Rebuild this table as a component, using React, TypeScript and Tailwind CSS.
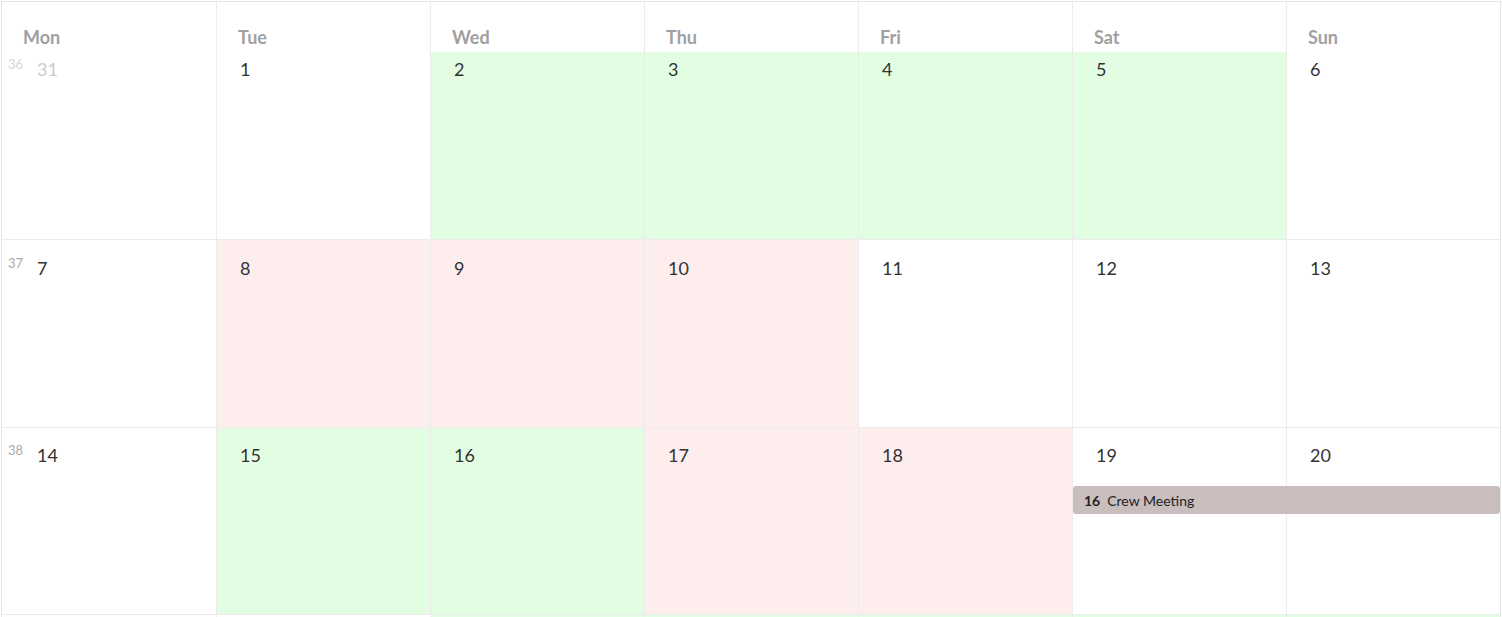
import React from "react";

type Tone = "none" | "green" | "pink";

interface Day {
  n: number;
  tone: Tone;
  other?: boolean;
}

interface Week {
  no: number;
  pt: string;
  h: string;
  days: Day[];
}

const DAY_NAMES = ["Mon", "Tue", "Wed", "Thu", "Fri", "Sat", "Sun"];

const WEEKS: Week[] = [
  {
    no: 36,
    pt: "pt-[3px]",
    h: "h-[188px]",
    days: [
      { n: 31, tone: "none", other: true },
      { n: 1, tone: "none" },
      { n: 2, tone: "green" },
      { n: 3, tone: "green" },
      { n: 4, tone: "green" },
      { n: 5, tone: "green" },
      { n: 6, tone: "none" },
    ],
  },
  {
    no: 37,
    pt: "pt-[14px]",
    h: "h-[188px]",
    days: [
      { n: 7, tone: "none" },
      { n: 8, tone: "pink" },
      { n: 9, tone: "pink" },
      { n: 10, tone: "pink" },
      { n: 11, tone: "none" },
      { n: 12, tone: "none" },
      { n: 13, tone: "none" },
    ],
  },
  {
    no: 38,
    pt: "pt-[13px]",
    h: "h-[187px]",
    days: [
      { n: 14, tone: "none" },
      { n: 15, tone: "green" },
      { n: 16, tone: "green" },
      { n: 17, tone: "pink" },
      { n: 18, tone: "pink" },
      { n: 19, tone: "none" },
      { n: 20, tone: "none" },
    ],
  },
];

// next week only peeks in at the bottom edge of the view
const NEXT_TONES: Tone[] = ["none", "none", "green", "green", "green", "green", "green"];

const toneClass: Record<Tone, string> = {
  none: "bg-white",
  green: "bg-[#e3fde3]",
  pink: "bg-[#fdeded]",
};

function DayCell({ day, first, week }: { day: Day; first: boolean; week: Week }) {
  return (
    <div
      className={`${toneClass[day.tone]} ${first ? "" : "border-l border-[#ececec]"} ${week.pt} flex items-start`}
    >
      {first ? (
        <>
          <span
            className={`w-[35px] pl-[6px] pt-[1px] text-[13px] leading-4 ${day.other ? "text-[#d6d6d6]" : "text-[#aaaaaa]"}`}
          >
            {week.no}
          </span>
          <span className={`text-lg leading-7 ${day.other ? "text-[#cccccc]" : "text-[#333]"}`}>
            {day.n}
          </span>
        </>
      ) : (
        <span className="pl-[23px] text-lg leading-7 text-[#333]">{day.n}</span>
      )}
    </div>
  );
}

export default function App() {
  return (
    <div
      className="h-[617px] overflow-hidden bg-white p-px"
      style={{ fontFamily: "Lato, 'Liberation Sans', sans-serif" }}
    >
      <div className="w-[1500px] border border-[#e3e5ea]">
        {/* weekday header */}
        <div className="grid h-[50px] grid-cols-7">
          {DAY_NAMES.map((d, i) => (
            <div
              key={d}
              className={`${i === 0 ? "" : "border-l border-[#ececec]"} pl-[21px] pt-[21px] text-lg font-bold leading-7 text-[#a0a0a0]`}
            >
              {d}
            </div>
          ))}
        </div>

        {WEEKS.map((w) => (
          <div key={w.no} className={`relative grid grid-cols-7 border-b border-[#ececec] ${w.h}`}>
            {w.days.map((d, i) => (
              <DayCell key={d.n} day={d} first={i === 0} week={w} />
            ))}
            {w.no === 38 && (
              <div className="absolute left-[1071px] top-[58px] flex h-[28px] w-[427px] items-center rounded-[3px] bg-[#c9bdbe] pl-[11px] text-[14px] text-[#222]">
                <span className="font-bold">16</span>
                <span className="ml-[7px]">Crew Meeting</span>
              </div>
            )}
          </div>
        ))}

        <div className="grid h-[10px] grid-cols-7">
          {NEXT_TONES.map((t, i) => (
            <div key={i} className={`${toneClass[t]} ${i === 0 ? "" : "border-l border-[#ececec]"}`} />
          ))}
        </div>
      </div>
    </div>
  );
}
